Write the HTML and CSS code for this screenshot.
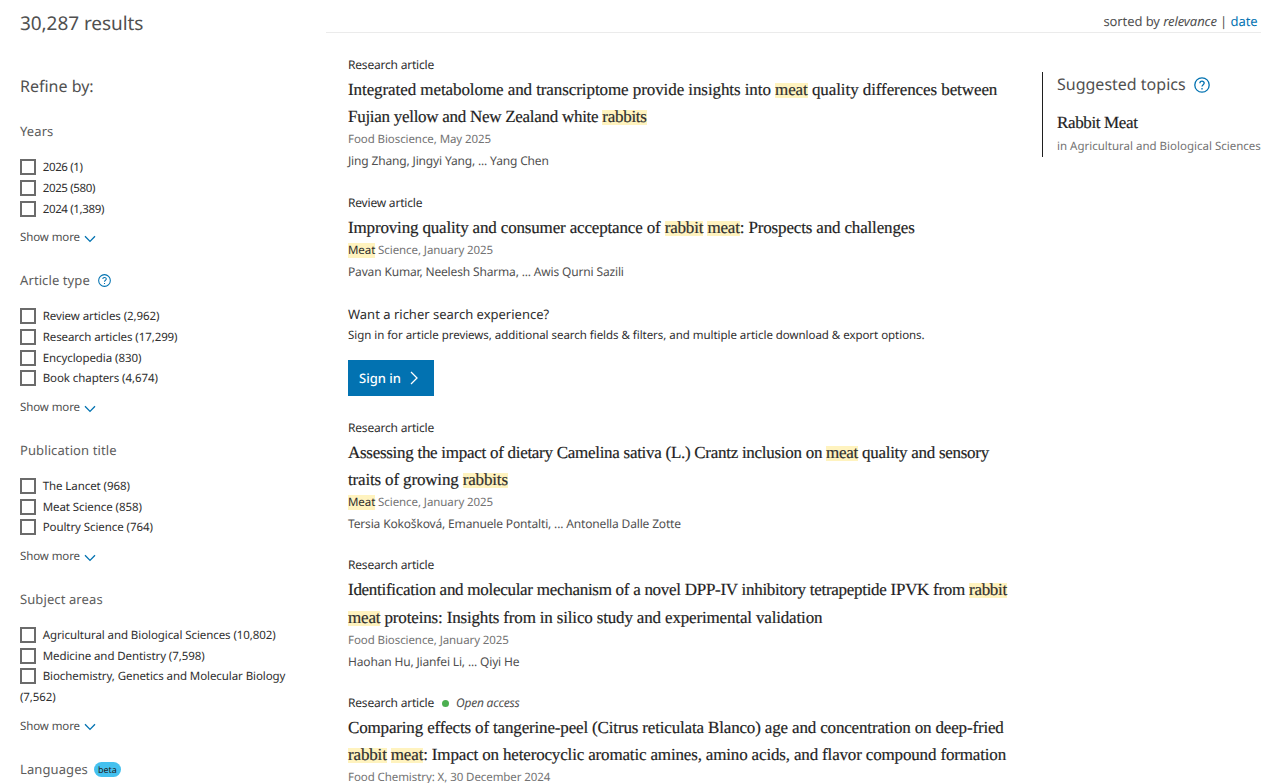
FILE: index.html
```html
<!DOCTYPE html>
<html lang="en">

<head>
    <meta charset="UTF-8">
    <meta name="viewport" content="width=device-width, initial-scale=1.0">
    <title>Search results</title>
    <link rel="stylesheet" href="styles.css">
</head>

<body>
    <svg class="sprite">
        <symbol id="down" viewBox="0 0 12 8"><path d="M1 1.2 L6 6.4 L11 1.2" /></symbol>
        <symbol id="help" viewBox="0 0 16 16">
            <circle cx="8" cy="8" r="7.2" />
            <path d="M5.9 6.3 C5.9 3.5 10.2 3.6 10.2 6.1 C10.2 7.7 8 7.7 8 9.6 M8 11 V12.4" />
        </symbol>
    </svg>
    <div class="page">
        <aside class="sidebar">
            <h1 class="count">30,287 results</h1>
            <h2 class="refine">Refine by:</h2>

            <section class="facet">
                <h3>Years</h3>
                <ul class="years">
                    <li><label><span class="box"></span>2026 (1)</label></li>
                    <li><label><span class="box"></span>2025 (580)</label></li>
                    <li><label><span class="box"></span>2024 (1,389)</label></li>
                </ul>
                <a class="more">Show more <svg class="down"><use href="#down" /></svg></a>
            </section>

            <section class="facet">
                <h3>Article type <svg class="help"><use href="#help" /></svg></h3>
                <ul>
                    <li><label><span class="box"></span>Review articles (2,962)</label></li>
                    <li><label><span class="box"></span>Research articles (17,299)</label></li>
                    <li><label><span class="box"></span>Encyclopedia (830)</label></li>
                    <li><label><span class="box"></span>Book chapters (4,674)</label></li>
                </ul>
                <a class="more">Show more <svg class="down"><use href="#down" /></svg></a>
            </section>

            <section class="facet">
                <h3>Publication title</h3>
                <ul>
                    <li><label><span class="box"></span>The Lancet (968)</label></li>
                    <li><label><span class="box"></span>Meat Science (858)</label></li>
                    <li><label><span class="box"></span>Poultry Science (764)</label></li>
                </ul>
                <a class="more">Show more <svg class="down"><use href="#down" /></svg></a>
            </section>

            <section class="facet">
                <h3>Subject areas</h3>
                <ul>
                    <li><label><span class="box"></span>Agricultural and Biological Sciences (10,802)</label></li>
                    <li><label><span class="box"></span>Medicine and Dentistry (7,598)</label></li>
                    <li><label><span class="box"></span>Biochemistry, Genetics and Molecular Biology<br>(7,562)</label></li>
                </ul>
                <a class="more">Show more <svg class="down"><use href="#down" /></svg></a>
            </section>

            <section class="facet">
                <h3>Languages <span class="beta">beta</span></h3>
            </section>
        </aside>

        <main class="main">
            <div class="sort">sorted by <i>relevance</i> | <a>date</a></div>
            <div class="columns">
                <div class="results">
                    <article class="item">
                        <p class="type">Research article</p>
                        <h2><span class="loose">Integrated metabolome and transcriptome provide insights into <em>meat</em> quality differences between</span><br><span class="tight">Fujian yellow and New Zealand white <em>rabbits</em></span></h2>
                        <p class="source">Food Bioscience, May 2025</p>
                        <p class="authors">Jing Zhang, Jingyi Yang, ... Yang Chen</p>
                    </article>

                    <article class="item">
                        <p class="type">Review article</p>
                        <h2>Improving quality and consumer acceptance of <em>rabbit</em> <em>meat</em>: Prospects and challenges</h2>
                        <p class="source"><em>Meat</em> Science, January 2025</p>
                        <p class="authors">Pavan Kumar, Neelesh Sharma, ... Awis Qurni Sazili</p>
                    </article>

                    <div class="promo">
                        <p class="promo-title">Want a richer search experience?</p>
                        <p class="promo-text">Sign in for article previews, additional search fields &amp; filters, and multiple article download &amp; export options.</p>
                        <a class="signin">Sign in <svg viewBox="0 0 8 14"><path d="M1 1 L7 7 L1 13" /></svg></a>
                    </div>

                    <article class="item">
                        <p class="type">Research article</p>
                        <h2><span class="tight">Assessing the impact of dietary Camelina sativa (L.) Crantz inclusion on <em>meat</em> quality and sensory</span><br>traits of growing <em>rabbits</em></h2>
                        <p class="source"><em>Meat</em> Science, January 2025</p>
                        <p class="authors">Tersia Kokošková, Emanuele Pontalti, ... Antonella Dalle Zotte</p>
                    </article>

                    <article class="item">
                        <p class="type">Research article</p>
                        <h2><span class="tight">Identification and molecular mechanism of a novel DPP-IV inhibitory tetrapeptide IPVK from <em>rabbit</em></span><br><em>meat</em> proteins: Insights from in silico study and experimental validation</h2>
                        <p class="source">Food Bioscience, January 2025</p>
                        <p class="authors">Haohan Hu, Jianfei Li, ... Qiyi He</p>
                    </article>

                    <article class="item">
                        <p class="type">Research article <span class="dot"></span><i>Open access</i></p>
                        <h2>Comparing effects of tangerine-peel (Citrus reticulata Blanco) age and concentration on deep-fried<br><em>rabbit</em> <em>meat</em>: Impact on heterocyclic aromatic amines, amino acids, and flavor compound formation</h2>
                        <p class="source">Food Chemistry: X, 30 December 2024</p>
                    </article>
                </div>

                <aside class="topics">
                    <h3>Suggested topics <svg class="help"><use href="#help" /></svg></h3>
                    <p class="topic">Rabbit Meat</p>
                    <p class="area">in Agricultural and Biological Sciences</p>
                </aside>
            </div>
        </main>
    </div>
</body>

</html>
```

FILE: styles.css
```css
* {
    margin: 0;
    padding: 0;
    box-sizing: border-box;
}

body {
    height: 783px;
    overflow: hidden;
    background-color: #fff;
    font-family: "Noto Sans", sans-serif;
    font-size: 12px;
    color: #2e2e2e;
    white-space: nowrap;
    text-rendering: geometricPrecision;
}

ul {
    list-style: none;
}

h1,
h2,
h3 {
    font-weight: normal;
}

svg {
    fill: none;
    stroke: #0272b1;
    stroke-width: 1.3;
}

.sprite {
    display: none;
}

.page {
    display: flex;
}

/* sidebar */
.sidebar {
    width: 326px;
    padding: 8px 0 0 20px;
    flex-shrink: 0;
}

.count {
    font-size: 19px;
    line-height: 30px;
    letter-spacing: -.07px;
    color: #505050;
}

.refine {
    margin-top: 33px;
    font-size: 16px;
    line-height: 30px;
    color: #505050;
}

.facet {
    margin-bottom: 21.7px;
}

.refine + .facet {
    margin-top: 20.2px;
}

.facet h3 {
    display: flex;
    align-items: center;
    margin-bottom: 15.9px;
    font-size: 13px;
    line-height: 21px;
    letter-spacing: .1px;
    color: #5c5c5c;
}

.facet li {
    font-size: 11.5px;
    line-height: 20.8px;
    letter-spacing: -.08px;
}

.facet .years li {
    letter-spacing: -.35px;
}

.box {
    display: inline-block;
    width: 16px;
    height: 16px;
    margin-right: 6.7px;
    border: 2px solid #6b6b6b;
    vertical-align: -4px;
}

.more {
    display: flex;
    align-items: center;
    margin-top: 8px;
    font-size: 11.5px;
    line-height: 20px;
    letter-spacing: -.1px;
    color: #505050;
}

.down {
    width: 12px;
    height: 8px;
    margin: 1px 0 0 4px;
}

.help {
    width: 13px;
    height: 13px;
    margin-left: 8px;
}

.beta {
    margin-left: 6px;
    padding: 0 4px;
    border-radius: 8px;
    background-color: #44c1ef;
    font-size: 9px;
    line-height: 15px;
    letter-spacing: 0;
    color: #1f1f1f;
}

/* main */
.main {
    width: 935px;
}

.sort {
    height: 33px;
    padding: 9px 3.5px 0 0;
    border-bottom: 1px solid #ebebeb;
    font-size: 13px;
    line-height: 24px;
    letter-spacing: -.08px;
    text-align: right;
    color: #505050;
}

.sort a {
    color: #0272b1;
}

.columns {
    display: flex;
}

.results {
    width: 715.5px;
    padding: 21px 0 0 22px;
    flex-shrink: 0;
}

.item {
    margin-bottom: 19.4px;
}

.item em {
    background-color: #fff3bf;
    font-style: normal;
    color: #2e2e2e;
}

.type {
    line-height: 22px;
    letter-spacing: -.2px;
}

.type i {
    color: #505050;
}

.item h2,
.topic {
    font-family: "Liberation Serif", serif;
    font-size: 17px;
    line-height: 27.2px;
    letter-spacing: -.16px;
    color: #1f1f1f;
    -webkit-text-stroke: .2px;
}

/* highlight is shorter than the glyph box */
.item h2 em {
    background: linear-gradient(transparent 3px, #fff3bf 3px, #fff3bf 18px, transparent 18px);
}

.item .loose {
    letter-spacing: -.08px;
}

.item .tight {
    letter-spacing: -.28px;
}

.source {
    padding-top: .8px;
    font-size: 11.5px;
    line-height: 18px;
    letter-spacing: -.08px;
    color: #737373;
}

.authors {
    padding-top: 1px;
    line-height: 22.2px;
    letter-spacing: -.16px;
    color: #505050;
}

.dot {
    display: inline-block;
    width: 7px;
    height: 7px;
    margin: 0 7px 0 5px;
    border-radius: 50%;
    background-color: #4caf50;
}

.promo-title {
    padding-top: 2px;
    font-size: 13px;
    line-height: 20px;
}

.promo-text {
    padding-top: 1px;
    font-size: 11.5px;
    line-height: 21px;
    letter-spacing: -.04px;
}

.signin {
    display: flex;
    align-items: center;
    width: 86px;
    height: 36px;
    margin: 13.6px 0 20.6px;
    padding-left: 11px;
    background-color: #0272b1;
    font-size: 13px;
    font-weight: 500;
    color: #fff;
}

.signin svg {
    width: 8px;
    height: 14px;
    margin-left: 9px;
    stroke: #fff;
}

/* suggested topics */
.topics {
    height: 85px;
    margin-top: 39px;
    padding-left: 14.5px;
    border-left: 1px solid #1f1f1f;
}

.topics h3 {
    display: flex;
    align-items: center;
    font-size: 16px;
    line-height: 25px;
    color: #505050;
}

.topics .help {
    width: 16px;
    height: 16px;
}

.topic {
    margin-top: 12px;
    letter-spacing: -.36px;
}

.area {
    font-size: 11.5px;
    line-height: 21px;
    color: #737373;
}
```
